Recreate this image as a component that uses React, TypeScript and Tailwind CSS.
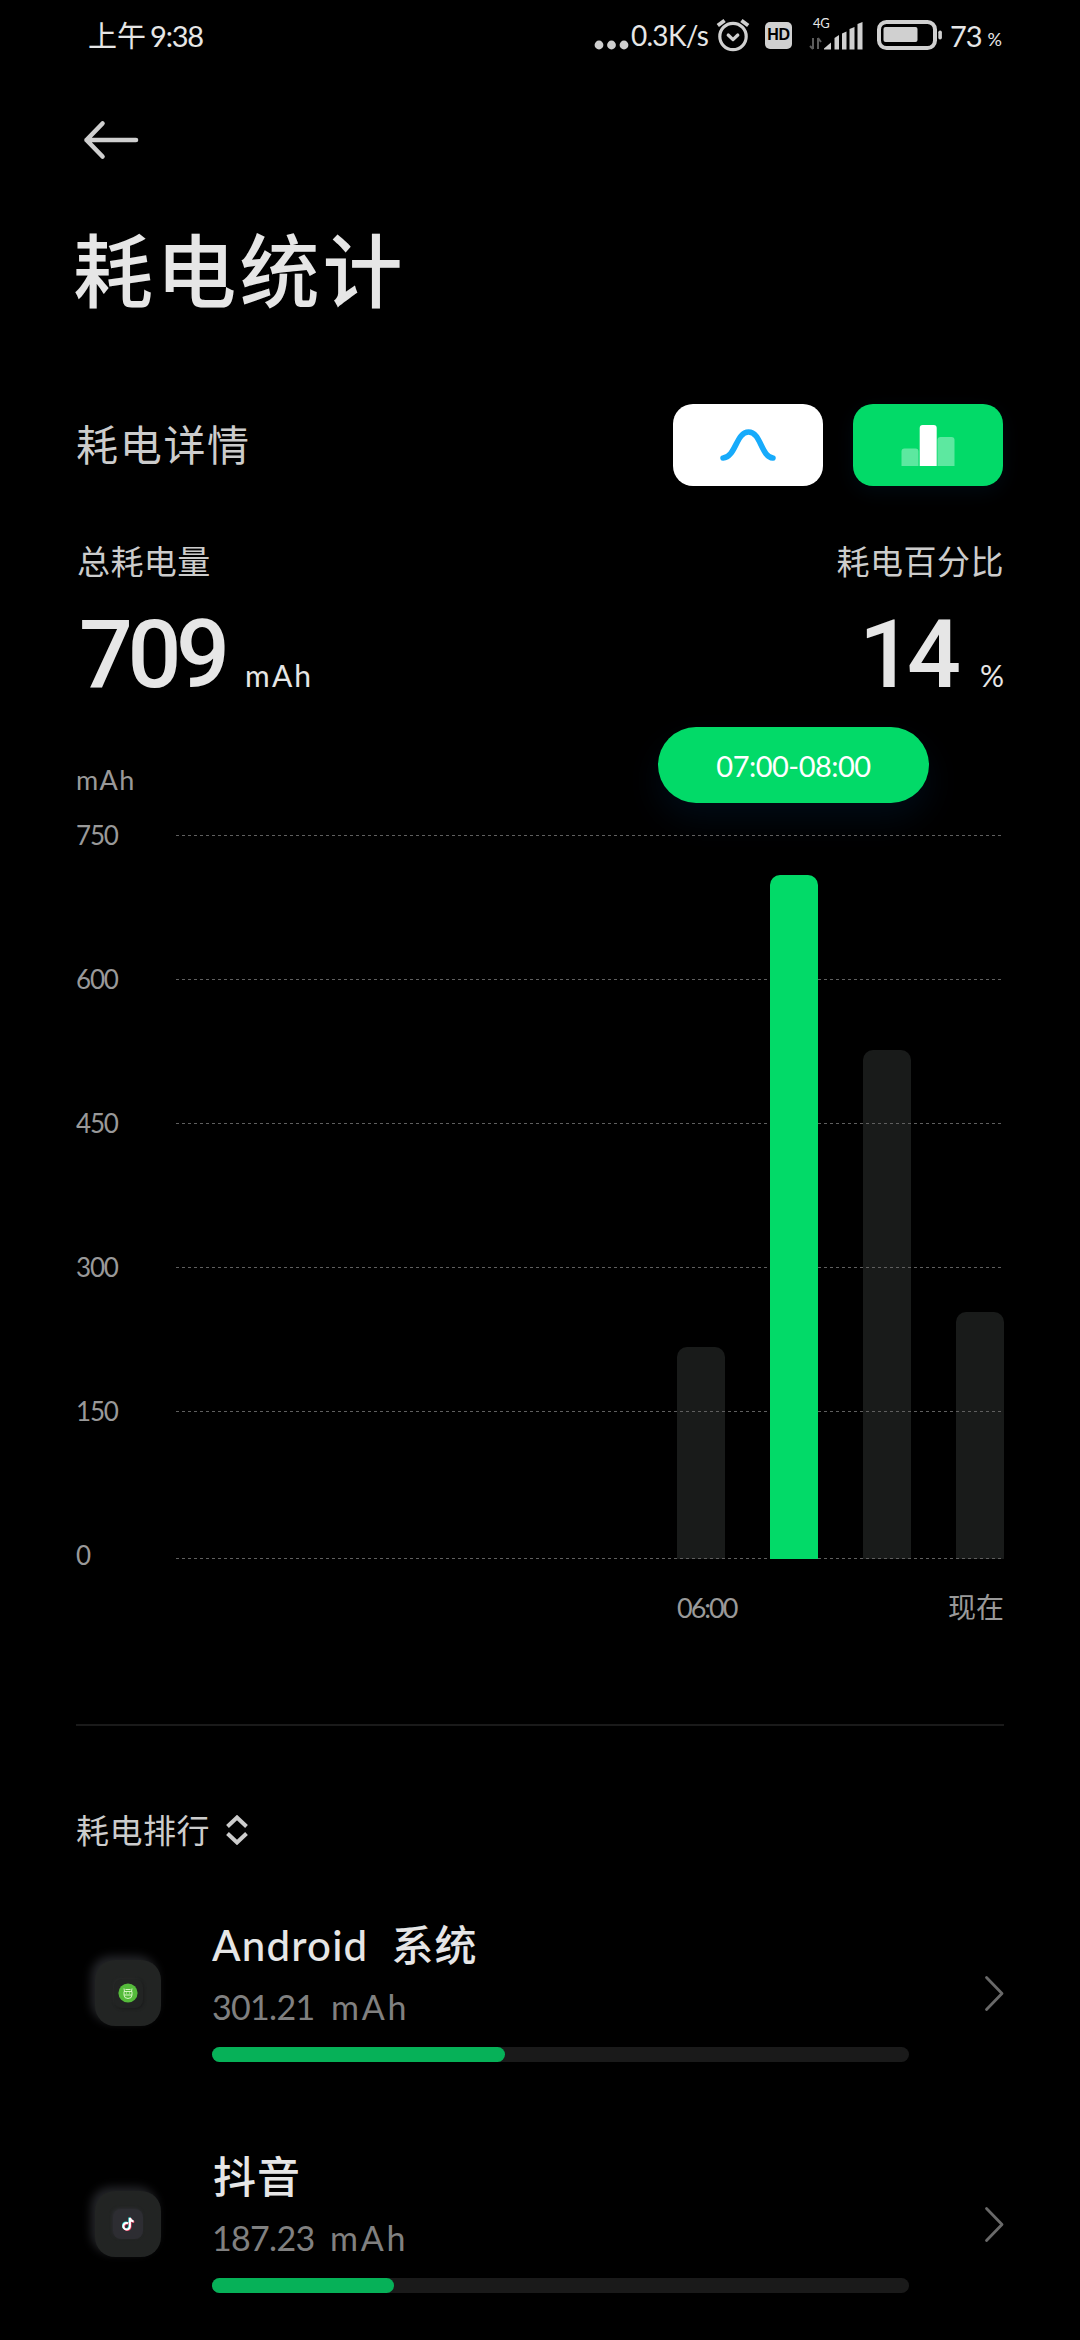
import React from 'react';

const GRID_LINES = [13, 157, 301, 445, 589, 736];
const Y_LABELS = ['750', '600', '450', '300', '150', '0'];

const BARS = [
  { x: 501, top: 525, active: false },
  { x: 594, top: 53, active: true },
  { x: 687, top: 228, active: false },
  { x: 780, top: 490, active: false },
];

interface AppUsage {
  id: string;
  name: React.ReactNode;
  value: string;
  nameClass: string;
  valueClass: string;
  filled: number;
  icon: React.ReactNode;
}

function StatusBar() {
  return (
    <div className="flex h-[70px] items-center justify-between pl-[88px] pr-[78px] text-[#e6e6e6]">
      <div className="flex items-center text-[29px] leading-none">
        <span>上午</span>
        <span className="ml-[4px] tracking-[-1.2px]">9:38</span>
      </div>

      <div className="flex items-center">
        <svg className="mt-[20px] h-[10px] w-[36px]" viewBox="0 0 36 10" fill="#cfcfcf">
          <circle cx="5" cy="5" r="4.4" />
          <circle cx="17.5" cy="5" r="4.4" />
          <circle cx="30" cy="5" r="4.4" />
        </svg>
        <span className="w-[85px] whitespace-nowrap pl-[1px] text-[28px] leading-none tracking-[-0.7px]">0.3K/s</span>

        {/* alarm */}
        <svg className="h-[34px] w-[36px]" viewBox="0 0 36 34" fill="none" stroke="#d0d0d0" strokeWidth="3.2" strokeLinecap="round" strokeLinejoin="round">
          <circle cx="18" cy="18.5" r="13.2" />
          <path d="M2.8 7.6 9.6 2.4M33.2 7.6 26.4 2.4" strokeLinecap="butt" strokeWidth="3.8" />
          <path d="m13.2 17 4.8 4.6 4.8-4.6" />
        </svg>

        {/* HD badge */}
        <span className="ml-[14px] flex h-[27px] w-[27px] items-center justify-center rounded-[5px] bg-[#d0d0d0] font-['Liberation_Sans'] text-[16px] font-bold leading-none tracking-[-0.5px] text-black">
          HD
        </span>

        <div className="ml-[15px] h-[36px] w-[57px]">
          <div className="h-[14px] pl-[6px] text-[13px] leading-[13px] tracking-[-0.3px]">4G</div>
          <svg className="mt-[-13px] block h-[32px] w-[57px]" viewBox="0 0 57 32">
            <g fill="none" stroke="#5c5c5c" strokeWidth="2">
              <path d="M6 20v11M6 31l-3-3M11 31V20M11 20l3 4" />
            </g>
            <g fill="#d0d0d0">
              <path d="M17 31.5v-1l7-6v7z" />
              <path d="M27.500 31.500V20l4.500-3v14.500z" />
              <path d="M35 31.500V15.500l4.500-2v18z" />
              <path d="M42.500 31.500V11l5-2v22.500z" />
              <path d="M50.500 31.500V6l5-2v27.500z" />
            </g>
          </svg>
        </div>

        {/* battery */}
        <svg className="ml-[13px] h-[30px] w-[66px]" viewBox="0 0 66 30">
          <rect x="2" y="2" width="56" height="26" rx="7.500" fill="none" stroke="#d0d0d0" strokeWidth="4" />
          <rect x="6.500" y="7" width="34" height="15" rx="2" fill="#d0d0d0" />
          <rect x="61.300" y="10.500" width="3.600" height="9" rx="1.800" fill="#d0d0d0" />
        </svg>
        <span className="ml-[7px] text-[29px] leading-none tracking-[-1px]">73</span>
        <span className="ml-[6px] mt-[8px] text-[18px] leading-none">%</span>
      </div>
    </div>
  );
}

function ChartSwitch() {
  return (
    <div className="flex gap-[30px]">
      <button className="flex h-[82px] w-[150px] items-center justify-center rounded-[20px] bg-white">
        <svg className="h-[34px] w-[58px]" viewBox="0 0 58 34" fill="none" stroke="#17abfb" strokeWidth="5.600" strokeLinecap="round">
          <path d="M4 30C17 29 17 4 29.500 4S42 29 54 30" />
        </svg>
      </button>
      <button className="flex h-[82px] w-[150px] items-center justify-center rounded-[20px] bg-[#02da68] shadow-[0_6px_20px_rgba(0,30,50,0.35)]">
        <svg className="h-[42px] w-[54px]" viewBox="0 0 54 42">
          <path d="M.5 42V27.500a3 3 0 0 1 3-3h11a3 3 0 0 1 3 3V42z" fill="#5de8a0" />
          <path d="M36.500 42V16a3 3 0 0 1 3-3h11a3 3 0 0 1 3 3v26z" fill="#5de8a0" />
          <path d="M18.700 42V4a3 3 0 0 1 3-3h11a3 3 0 0 1 3 3v38z" fill="#fff" />
        </svg>
      </button>
    </div>
  );
}

function UsageChart() {
  return (
    <section className="mt-[37px] text-[#999]">
      <div className="flex h-[76px] items-center">
        <span className="mt-[28px] w-[582px] text-[27px] leading-none tracking-[1.4px]">mAh</span>
        <span className="flex h-[76px] w-[271px] items-center justify-center rounded-full bg-[#02da68] text-[29px] leading-none tracking-[-0.5px] text-white shadow-[0_16px_34px_rgba(0,28,56,0.4)]">
          07:00-08:00
        </span>
      </div>

      <div className="mt-[19px] flex h-[746px]">
        <div className="flex w-[100px] flex-col justify-between text-[26px] leading-[26px] tracking-[-1.2px]">
          {Y_LABELS.map((label) => (
            <span key={label}>{label}</span>
          ))}
        </div>
        <svg className="h-[746px] w-[828px]" viewBox="0 0 828 746">
          {BARS.filter((b) => !b.active).map((b) => (
            <path key={b.x} d={`M${b.x} 737V${b.top + 10}a10 10 0 0 1 10-10h28a10 10 0 0 1 10 10V737z`} fill="#191b1a" />
          ))}
          {GRID_LINES.map((y) => (
            <path key={y} d={`M0 ${y + 0.5}H826`} stroke="#5f5f5f" strokeWidth="1" strokeDasharray="3 3" />
          ))}
          {BARS.filter((b) => b.active).map((b) => (
            <path key={b.x} d={`M${b.x} 737V${b.top + 10}a10 10 0 0 1 10-10h28a10 10 0 0 1 10 10V737z`} fill="#02da68" />
          ))}
        </svg>
      </div>

      <div className="mt-[20px] flex h-[38px] items-center justify-between pl-[601px] text-[27px] leading-none">
        <span className="tracking-[-2px]">06:00</span>
        <span className="text-[28px]">现在</span>
      </div>
    </section>
  );
}

const AndroidIcon = () => (
  <div className="flex h-[29px] w-[29px] items-center justify-center rounded-[8px] bg-[#222423] shadow-[1px_1px_3px_#1b1c1c,-1px_-1px_2px_#2a2c2b]">
    <svg className="h-[20px] w-[20px]" viewBox="0 0 20 20">
      <circle cx="10" cy="10" r="9.600" fill="#55bb3b" />
      <g fill="none" stroke="#d6f5c4" strokeWidth="1">
        <path d="M6 8.500h8v3.500a4 3.500 0 0 1-8 0zM6.500 8.500 6 5.500M13.500 8.500l.5-3M6 12h8M7.500 6.500h5" />
        <path d="M8 10h1M11 10h1" />
      </g>
    </svg>
  </div>
);

const DouyinIcon = () => (
  <div className="flex h-[30px] w-[30px] items-center justify-center rounded-[8px] bg-[#2d2d32] shadow-[-1px_-1px_3px_#2b2c30]">
    <svg className="h-[15px] w-[13px]" viewBox="0 0 14 16" fill="none" strokeWidth="2.200">
      <path d="M6.500 6.700a3.500 3.500 0 1 0 2 3.200V1c.5 2.200 2 3.500 4 3.700" stroke="#2be0dc" transform="translate(-.6 -.5)" />
      <path d="M6.500 6.700a3.500 3.500 0 1 0 2 3.200V1c.5 2.200 2 3.500 4 3.700" stroke="#f0365a" transform="translate(.7 .6)" />
      <path d="M6.500 6.700a3.500 3.500 0 1 0 2 3.200V1c.5 2.200 2 3.500 4 3.700" stroke="#fff" />
    </svg>
  </div>
);

const APPS: AppUsage[] = [
  {
    id: 'android',
    name: (
      <>
        <span className="tracking-[1.2px]">Android</span>
        <span className="ml-[23px] tracking-[1px]">系统</span>
      </>
    ),
    value: '301.21',
    nameClass: 'text-[42px]',
    valueClass: 'w-[119px] tracking-[-0.7px]',
    filled: 293,
    icon: <AndroidIcon />,
  },
  {
    id: 'douyin',
    name: '抖音',
    value: '187.23',
    nameClass: 'pl-[1px] text-[43px] tracking-[1px]',
    valueClass: 'w-[118px] tracking-[-0.7px]',
    filled: 182,
    icon: <DouyinIcon />,
  },
];

function AppRow({ app }: { app: AppUsage }) {
  return (
    <div className="flex h-[231px]">
      <div className="ml-[19px] mt-[40px] flex h-[66px] w-[66px] items-center justify-center rounded-[20px] bg-[#222423] shadow-[-4px_-4px_10px_#25262a]">
        {app.icon}
      </div>
      <div className="ml-[51px] w-[697px]">
        <div className={`flex h-[50px] items-center whitespace-nowrap font-medium leading-none text-[#e6e6e6] ${app.nameClass}`}>
          {app.name}
        </div>
        <div className="mt-[17px] flex h-[40px] items-center text-[34px] leading-none text-[#808080]">
          <span className={app.valueClass}>{app.value}</span>
          <span className="tracking-[2.8px]">mAh</span>
        </div>
        <div className="mt-[20px] h-[15px] rounded-full bg-[#1a1a1a]">
          <div className="h-[15px] rounded-full bg-[#06b158]" style={{ width: app.filled }} />
        </div>
      </div>
      <svg className="ml-[75px] mt-[55px] h-[37px] w-[20px]" viewBox="0 0 20 37" fill="none" stroke="#696969" strokeWidth="2.800" strokeLinecap="round" strokeLinejoin="round">
        <path d="m2.500 2.500 15.500 16-15.500 16" />
      </svg>
    </div>
  );
}

export default function App() {
  return (
    <div className="h-[2340px] w-[1080px] overflow-hidden bg-black font-['Lato','Noto_Sans_CJK_SC',sans-serif]">
      <StatusBar />

      <main className="px-[76px]">
        <div className="flex h-[140px] items-center pl-[7px]">
          <svg className="h-[40px] w-[56px]" viewBox="0 0 56 40" fill="none" stroke="#cfcfcf" strokeWidth="4.600" strokeLinecap="round" strokeLinejoin="round">
            <path d="M3.500 20H53M19.500 3.500 3.500 20l16 16.500" />
          </svg>
        </div>

        <h1 className="ml-[-3px] flex h-[120px] items-center text-[80px] font-medium leading-none tracking-[3.2px] text-[#e6e6e6]">
          耗电统计
        </h1>

        <div className="mt-[74px] flex h-[82px] items-center justify-between">
          <h2 className="text-[42px] leading-none tracking-[1.7px] text-[#ccc]">耗电详情</h2>
          <div className="mr-[1px]">
            <ChartSwitch />
          </div>
        </div>

        <div className="mt-[58px] flex h-[34px] items-center justify-between pl-[1px] text-[33px] leading-none text-[#ccc]">
          <span className="tracking-[0.4px]">总耗电量</span>
          <span className="tracking-[0.5px]">耗电百分比</span>
        </div>

        <div className="mt-[37px] flex h-[75px] items-baseline justify-between pl-[3px] text-[#e6e6e6]">
          <div className="flex items-baseline">
            <span className="w-[164px] font-['Roboto'] text-[95px] font-medium leading-[80px] tracking-[-5.5px]">709</span>
            <span className="ml-[2px] text-[30px] tracking-[2.2px]">mAh</span>
          </div>
          <div className="flex items-baseline">
            <span className="font-['Roboto'] text-[95px] font-medium leading-[80px] tracking-[-6px]">14</span>
            <span className="ml-[25px] text-[30px]">%</span>
          </div>
        </div>

        <UsageChart />

        <div className="mt-[98px] h-[2px] bg-[#1a1a1a]" />

        <div className="mt-[84px] flex h-[40px] items-center">
          <span className="text-[33px] leading-none tracking-[0.5px] text-[#ccc]">耗电排行</span>
          <svg className="ml-[16px] h-[30px] w-[22px]" viewBox="0 0 22 30" fill="none" stroke="#ccc" strokeWidth="4">
            <path d="m1.500 11.500 9.500-9 9.500 9M1.500 18.500l9.500 9 9.500-9" />
          </svg>
        </div>

        <div className="mt-[70px]">
          {APPS.map((app) => (
            <AppRow key={app.id} app={app} />
          ))}
        </div>
      </main>
    </div>
  );
}
